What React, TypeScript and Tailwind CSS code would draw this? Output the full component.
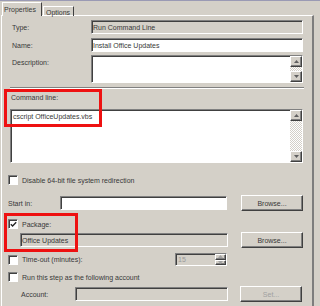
import React from "react";

const F =
  "border border-t-[#808080] border-l-[#808080] border-b-white border-r-white shadow-[inset_1px_1px_0_#404040]";
const B =
  "flex items-center justify-center border border-t-white border-l-white border-b-[#404040] border-r-[#404040] shadow-[inset_-1px_-1px_0_#808080] bg-[#d4d0c8]";

function Arrow({ up, color = "#404040" }: { up: boolean; color?: string }) {
  return (
    <svg width="5" height="3" viewBox="0 0 5 3">
      {up ? <path d="M2.5 0L5 3H0z" fill={color} /> : <path d="M0 0H5L2.5 3z" fill={color} />}
    </svg>
  );
}

function ScrollBtn({ up }: { up: boolean }) {
  return (
    <div className={`w-[12px] h-[11px] shrink-0 ${B}`}>
      <Arrow up={up} color="#606060" />
    </div>
  );
}

function ScrollBar() {
  return (
    <div className="ml-auto w-[12px] h-full flex flex-col">
      <ScrollBtn up />
      <div className="flex-1 bg-[repeating-conic-gradient(#d4d0c8_0%_25%,#ffffff_0%_50%)] bg-[length:2px_2px]" />
      <ScrollBtn up={false} />
    </div>
  );
}

function Check({ checked }: { checked?: boolean }) {
  return (
    <div className={`w-[10px] h-[10px] shrink-0 bg-white flex items-center justify-center ${F}`}>
      {checked && (
        <svg width="7" height="7" viewBox="0 0 7 7">
          <path d="M0.8 3.2 L2.6 5 L6.2 1.2" stroke="#222" strokeWidth="1.3" fill="none" />
        </svg>
      )}
    </div>
  );
}

export default function App() {
  return (
    <div className="relative w-[320px] h-[306px] overflow-hidden bg-[#d4d0c8] text-[7px] leading-[9px] text-[#383838] font-['Liberation_Sans',Arial,sans-serif]">
      <div className="h-px bg-[#9a9ab4]" />
      {/* tabs */}
      <div className="relative z-10 flex items-end h-[15px] pl-[2px]">
        <div className="w-[40px] h-[14px] bg-[#d4d0c8] border-t border-l border-r border-t-white border-l-white border-r-[#404040] pl-[1px] pt-[2px]">
          Properties
        </div>
        <div className="w-[31px] h-[10px] ml-px border-t border-l border-r border-t-white border-l-white border-r-[#404040] pl-[2px] pt-px">
          Options
        </div>
      </div>
      {/* panel */}
      <div className="-mt-px ml-px w-[313px] h-[300px] border-t border-l border-t-white border-l-white border-r-2 border-r-[#7d7d7d] flex flex-col">
        {/* Type */}
        <div className="flex mt-[4px] h-[14px]">
          <div className="w-[89px] pl-[10px] flex items-center">Type:</div>
          <div className={`w-[212px] h-[14px] bg-[#d4d0c8] flex items-center pl-[1px] ${F}`}>Run Command Line</div>
        </div>
        {/* Name */}
        <div className="flex mt-[4px] h-[14px]">
          <div className="w-[89px] pl-[10px] flex items-center">Name:</div>
          <div className={`w-[212px] h-[14px] bg-white flex items-center pl-[1px] ${F}`}>Install Office Updates</div>
        </div>
        {/* Description */}
        <div className="flex mt-[3px] h-[28px]">
          <div className="w-[89px] pl-[10px] pt-[3px]">Description:</div>
          <div className={`w-[212px] h-[28px] bg-white flex ${F}`}>
            <ScrollBar />
          </div>
        </div>
        {/* separator */}
        <div className="mt-[4px] ml-[8px] w-[294px] h-[2px] border-t border-b border-t-[#808080] border-b-white" />
        {/* Command line */}
        <div className="mt-[4px] pl-[9px] h-[9px]">Command line:</div>
        <div className={`mt-[7px] ml-[8px] w-[293px] h-[54px] bg-white flex ${F}`}>
          <div className="pl-[2px] pt-[2px]">cscript OfficeUpdates.vbs</div>
          <ScrollBar />
        </div>
        {/* Disable 64-bit */}
        <div className="mt-[12px] ml-[6px] h-[10px] flex items-center gap-[4px]">
          <Check />
          <span>Disable 64-bit file system redirection</span>
        </div>
        {/* Start in */}
        <div className="mt-[10px] h-[16px] flex">
          <div className="ml-[6px] w-[52px] flex items-center">Start in:</div>
          <div className={`mt-px w-[167px] h-[14px] bg-white ${F}`} />
          <div className={`ml-[14px] w-[62px] h-[16px] ${B}`}>Browse...</div>
        </div>
        {/* Package */}
        <div className="mt-[8px] ml-[6px] h-[10px] flex items-center gap-[4px]">
          <Check checked />
          <span>Package:</span>
        </div>
        <div className="mt-[3px] h-[16px] flex">
          <div className={`ml-[18px] mt-px w-[208px] h-[14px] bg-[#d4d0c8] flex items-center pl-px ${F}`}>
            Office Updates
          </div>
          <div className={`ml-[13px] w-[62px] h-[16px] ${B}`}>Browse...</div>
        </div>
        {/* Time-out */}
        <div className="mt-[5px] h-[13px] flex items-center">
          <div className="ml-[6px] w-[167px] flex items-center gap-[4px]">
            <Check />
            <span>Time-out (minutes):</span>
          </div>
          <div className={`w-[52px] h-[13px] bg-[#d4d0c8] flex items-center ${F}`}>
            <span className="pl-[2px] text-[#9a9a9a]">15</span>
            <div className="ml-auto w-[11px] h-full flex flex-col">
              <div className={`flex-1 ${B}`}>
                <Arrow up color="#a0a0a0" />
              </div>
              <div className={`flex-1 ${B}`}>
                <Arrow up={false} color="#a0a0a0" />
              </div>
            </div>
          </div>
        </div>
        {/* Run as */}
        <div className="mt-[6px] ml-[6px] h-[10px] flex items-center gap-[4px]">
          <Check />
          <span>Run this step as the following account</span>
        </div>
        {/* Account */}
        <div className="mt-[4px] h-[16px] flex">
          <div className="ml-[19px] w-[54px] flex items-center">Account:</div>
          <div className={`mt-px w-[153px] h-[14px] bg-[#d4d0c8] ${F}`} />
          <div className={`ml-[12px] w-[62px] h-[16px] text-[#a0a0a0] ${B}`}>Set...</div>
        </div>
      </div>
      {/* red highlight boxes */}
      <div className="absolute left-[4px] top-[89px] w-[98px] h-[38px] border-[3px] border-[#ee1111]" />
      <div className="absolute left-[4px] top-[213px] w-[74px] h-[39px] border-[3px] border-[#ee1111]" />
    </div>
  );
}
